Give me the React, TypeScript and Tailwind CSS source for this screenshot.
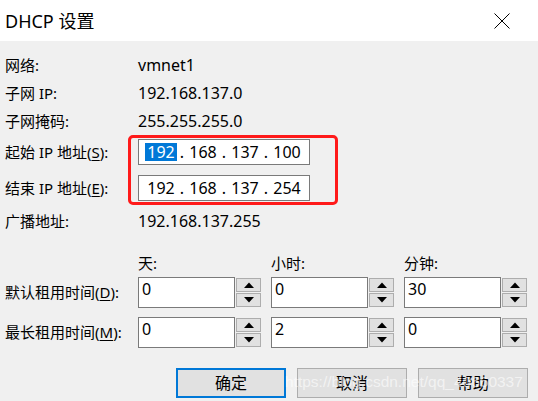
import React from 'react';

const font = { fontFamily: '"Noto Sans", "Noto Sans CJK SC", sans-serif' };

function Underlined({ label, letter }: { label: string; letter: string }) {
  return (
    <span>
      {label}(<span className="underline underline-offset-2">{letter}</span>):
    </span>
  );
}

function IpBox({ parts, selected }: { parts: string[]; selected?: boolean }) {
  return (
    <div className="flex h-[26px] w-[172px] items-center border border-[#7a7a7a] bg-white pl-[8px] text-[16px] leading-none">
      {parts.map((p, i) => (
        <React.Fragment key={i}>
          <span className="flex w-[28px] justify-center">
            <span
              className={
                i === 0 && selected
                  ? 'flex h-[18px] items-center bg-[#0078d7] px-[2px] text-white'
                  : 'flex h-[18px] items-center'
              }
            >
              {p}
            </span>
          </span>
          {i < parts.length - 1 && <span className="flex w-[14px] justify-center">.</span>}
        </React.Fragment>
      ))}
    </div>
  );
}

function Tri({ down }: { down?: boolean }) {
  return (
    <svg width="10" height="6" viewBox="0 0 10 6">
      <path d={down ? 'M0 0 L10 0 L5 5.5 Z' : 'M5 0.5 L10 6 L0 6 Z'} fill="#000" />
    </svg>
  );
}

function Spinner({ value }: { value: string }) {
  return (
    <div className="flex h-[31px] w-[123px]">
      <div className="flex h-full w-[97px] border border-[#7a7a7a] bg-white pl-[3px] pt-[3px] text-[16px] leading-none">
        {value}
      </div>
      <div className="ml-[1px] flex w-[25px] flex-col gap-[1px] py-[1px]">
        <div className="flex flex-1 items-center justify-center border border-[#adadad] bg-[#e1e1e1]">
          <Tri />
        </div>
        <div className="flex flex-1 items-center justify-center border border-[#adadad] bg-[#e1e1e1]">
          <Tri down />
        </div>
      </div>
    </div>
  );
}

export default function App() {
  return (
    <div className="relative h-[401px] w-[538px] overflow-hidden bg-[#f0f0f0] text-black" style={font}>
      {/* Title bar */}
      <div className="flex h-[41px] items-center justify-between bg-white pl-[5px] pr-[28px]">
        <span className="text-[18px] leading-none">DHCP 设置</span>
        <svg width="16" height="16" viewBox="0 0 16 16">
          <path d="M0.5 0.5 L15.5 15.5 M15.5 0.5 L0.5 15.5" stroke="#000" strokeWidth="1" />
        </svg>
      </div>

      <div className="flex flex-col pl-[5px] text-[15px] leading-none">
        {/* Info rows */}
        <div className="mt-[10px] grid grid-cols-[133px_1fr]">
          <div className="flex h-[28px] items-center">网络:</div>
          <div className="flex h-[28px] items-center text-[16px]">vmnet1</div>
          <div className="flex h-[28px] items-center">子网 IP:</div>
          <div className="flex h-[28px] items-center text-[16px]">192.168.137.0</div>
          <div className="flex h-[28px] items-center">子网掩码:</div>
          <div className="flex h-[28px] items-center text-[16px]">255.255.255.0</div>
        </div>

        <div className="mt-[4px] grid grid-cols-[133px_1fr] gap-y-[10px]">
          <div className="flex h-[26px] items-center">
            <Underlined label="起始 IP 地址" letter="S" />
          </div>
          <IpBox parts={['192', '168', '137', '100']} selected />
          <div className="flex h-[26px] items-center">
            <Underlined label="结束 IP 地址" letter="E" />
          </div>
          <IpBox parts={['192', '168', '137', '254']} />
        </div>

        <div className="mt-[7px] grid grid-cols-[133px_1fr]">
          <div className="flex h-[26px] items-center">广播地址:</div>
          <div className="flex h-[26px] items-center text-[16px]">192.168.137.255</div>
        </div>

        {/* Lease times */}
        <div className="mt-[21px] grid grid-cols-[123px_123px_123px_123px] gap-x-[10px]">
          <div />
          <div className="flex h-[16px] items-center">天:</div>
          <div className="flex h-[16px] items-center">小时:</div>
          <div className="flex h-[16px] items-center">分钟:</div>
        </div>
        <div className="mt-[6px] grid grid-cols-[123px_123px_123px_123px] gap-x-[10px] gap-y-[9px]">
          <div className="flex h-[31px] items-center whitespace-nowrap">
            <Underlined label="默认租用时间" letter="D" />
          </div>
          <Spinner value="0" />
          <Spinner value="0" />
          <Spinner value="30" />
          <div className="flex h-[31px] items-center whitespace-nowrap">
            <Underlined label="最长租用时间" letter="M" />
          </div>
          <Spinner value="0" />
          <Spinner value="2" />
          <Spinner value="0" />
        </div>

        {/* Buttons */}
        <div className="mt-[20px] flex justify-end gap-[11px] pr-[10px] text-[16px]">
          <button className="flex h-[30px] w-[110px] items-center justify-center border-2 border-[#0078d7] bg-[#e1e1e1]">
            确定
          </button>
          <button className="flex h-[30px] w-[110px] items-center justify-center border border-[#adadad] bg-[#e1e1e1]">
            取消
          </button>
          <button className="flex h-[30px] w-[110px] items-center justify-center border border-[#adadad] bg-[#e1e1e1]">
            帮助
          </button>
        </div>
      </div>

      {/* Red annotation */}
      <div className="pointer-events-none absolute left-[128px] top-[135px] h-[70px] w-[210px] rounded-[5px] border-[3px] border-[#ff1a1a]" />

      {/* Watermark */}
      <div
        className="pointer-events-none absolute left-[285px] top-[374px] text-[15.5px] leading-none text-white/60"
        style={{ fontFamily: '"Liberation Sans", Arial, sans-serif' }}
      >
        https://blog.csdn.net/qq_40660337
      </div>
    </div>
  );
}
